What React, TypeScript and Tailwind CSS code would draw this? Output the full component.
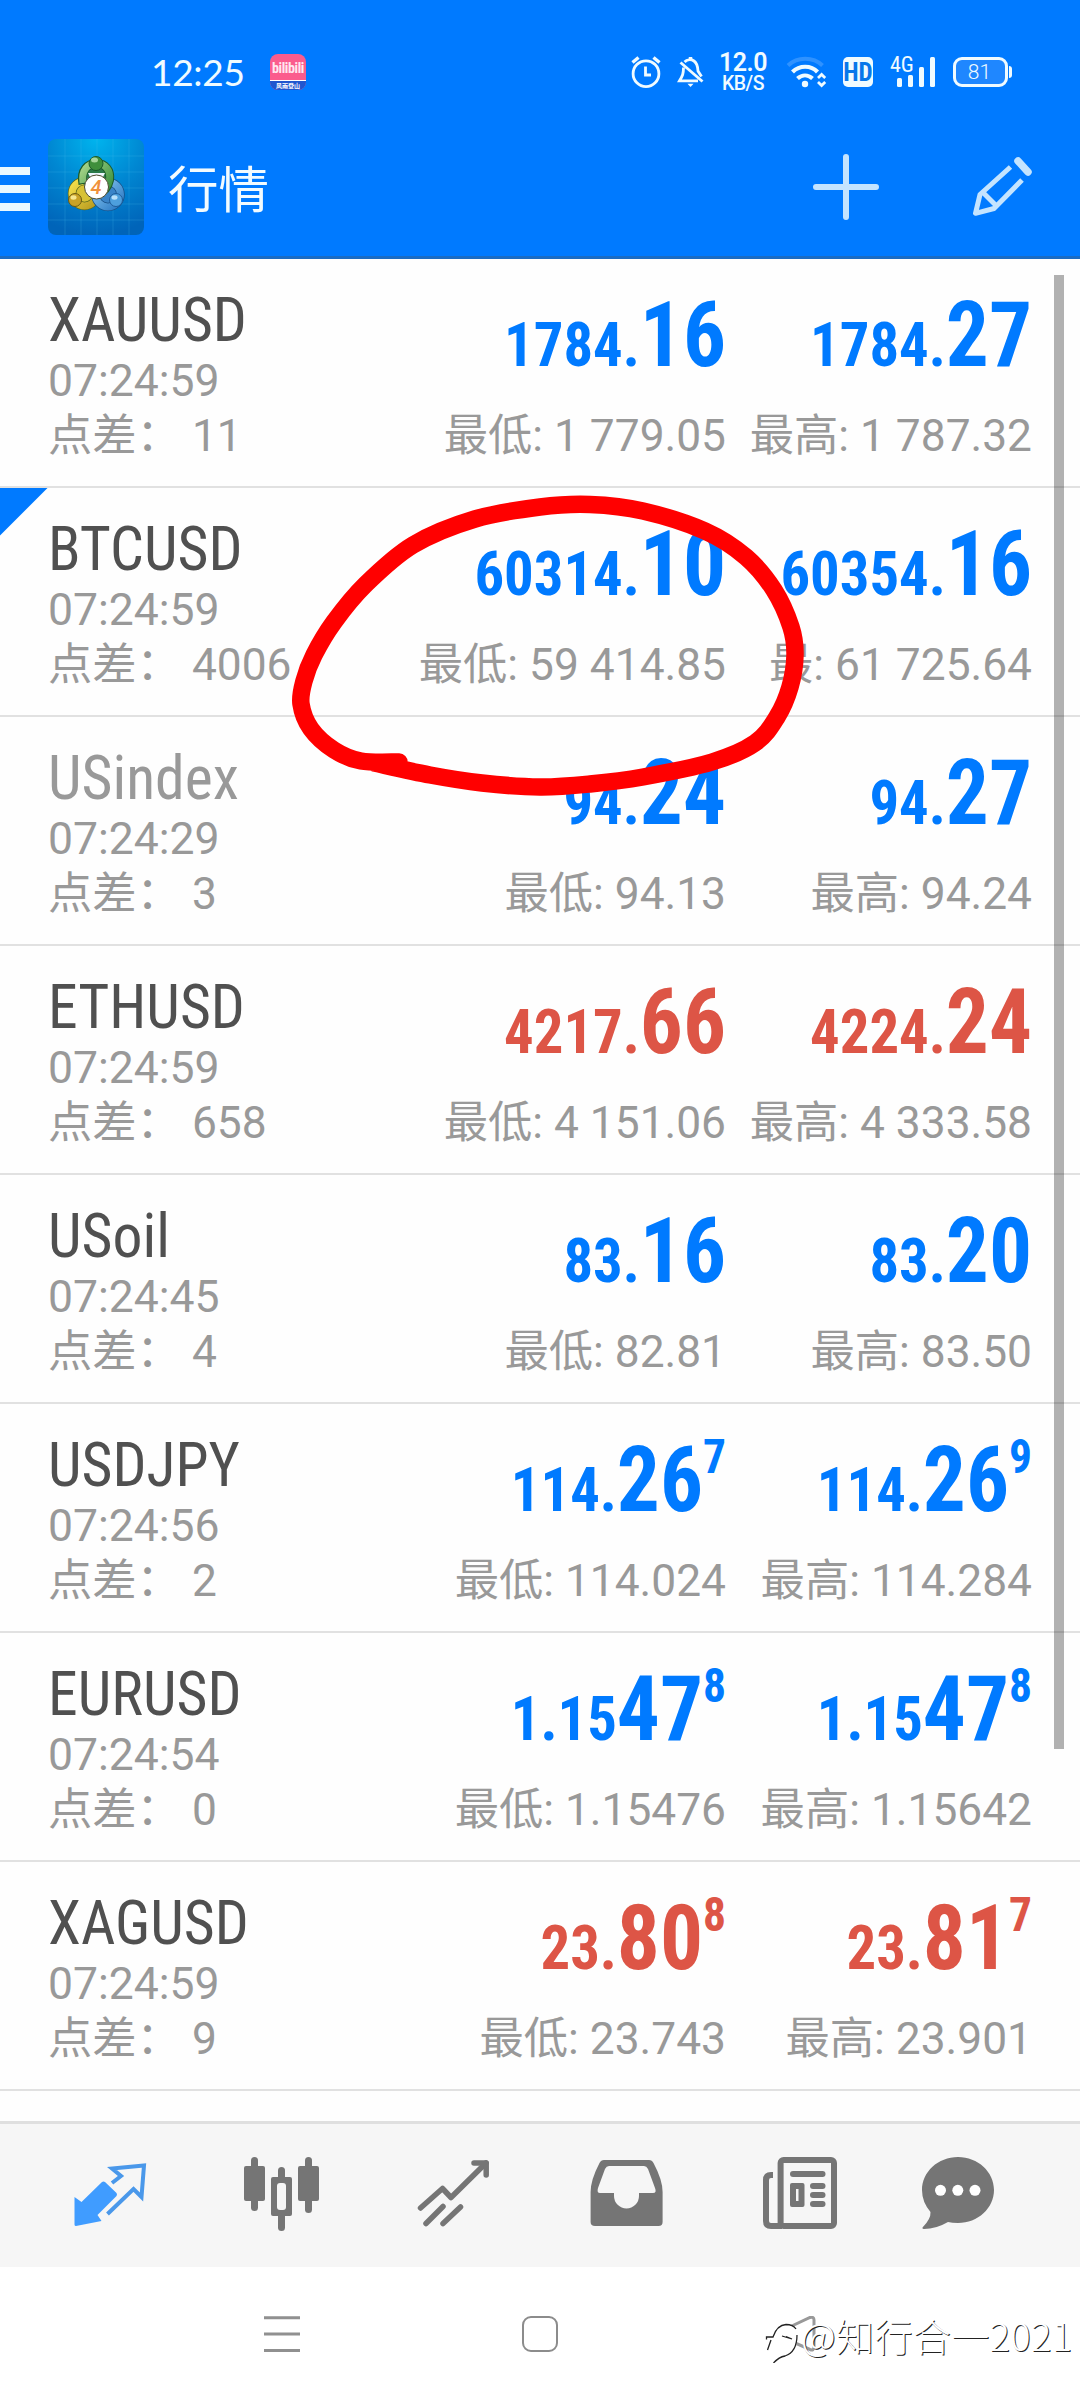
import React from "react";

type Price = { lead: string; big: string; sup?: string };
type Quote = {
  symbol: string;
  time: string;
  spread: string;
  bid: Price;
  ask: Price;
  low: string;
  high: string;
  highLabel?: string;
  down?: boolean;
  muted?: boolean;
  flagged?: boolean;
};

const quotes: Quote[] = [
  { symbol: "XAUUSD", time: "07:24:59", spread: "11", bid: { lead: "1784.", big: "16" }, ask: { lead: "1784.", big: "27" }, low: "1 779.05", high: "1 787.32" },
  { symbol: "BTCUSD", time: "07:24:59", spread: "4006", bid: { lead: "60314.", big: "10" }, ask: { lead: "60354.", big: "16" }, low: "59 414.85", high: "61 725.64", highLabel: "最", flagged: true },
  { symbol: "USindex", time: "07:24:29", spread: "3", bid: { lead: "94.", big: "24" }, ask: { lead: "94.", big: "27" }, low: "94.13", high: "94.24", muted: true },
  { symbol: "ETHUSD", time: "07:24:59", spread: "658", bid: { lead: "4217.", big: "66" }, ask: { lead: "4224.", big: "24" }, low: "4 151.06", high: "4 333.58", down: true },
  { symbol: "USoil", time: "07:24:45", spread: "4", bid: { lead: "83.", big: "16" }, ask: { lead: "83.", big: "20" }, low: "82.81", high: "83.50" },
  { symbol: "USDJPY", time: "07:24:56", spread: "2", bid: { lead: "114.", big: "26", sup: "7" }, ask: { lead: "114.", big: "26", sup: "9" }, low: "114.024", high: "114.284" },
  { symbol: "EURUSD", time: "07:24:54", spread: "0", bid: { lead: "1.15", big: "47", sup: "8" }, ask: { lead: "1.15", big: "47", sup: "8" }, low: "1.15476", high: "1.15642" },
  { symbol: "XAGUSD", time: "07:24:59", spread: "9", bid: { lead: "23.", big: "80", sup: "8" }, ask: { lead: "23.", big: "81", sup: "7" }, low: "23.743", high: "23.901", down: true },
];

function PriceText({ price, down }: { price: Price; down?: boolean }) {
  return (
    <div className={`flex h-[90px] origin-right scale-x-[0.947] items-baseline justify-end whitespace-nowrap font-['Roboto_Condensed',Roboto,sans-serif] font-bold leading-[90px] [font-stretch:75%] ${down ? "text-[#dd5546]" : "text-[#007aff]"}`}>
      <span className="text-[62px]">{price.lead}</span>
      <span className="text-[90px]">{price.big}</span>
      {price.sup && <span className="relative -top-[38px] text-[48px]">{price.sup}</span>}
    </div>
  );
}

function QuoteRow({ q }: { q: Quote }) {
  return (
    <div className="relative flex h-[229px] border-b-2 border-[#e1e1e1] pl-12 pr-12">
      {q.flagged && (
        <svg className="absolute left-0 top-0" width="48" height="48" viewBox="0 0 48 48">
          <path d="M0 0H47.500L0 47.500Z" fill="#007aff" />
        </svg>
      )}
      <div className="w-[310px] whitespace-nowrap pt-7 text-[44.5px] leading-[55px] text-[#999]">
        <div className={`mb-px h-[66px] w-[240px] origin-left scale-x-[0.963] font-['Roboto_Condensed',Roboto,sans-serif] text-[62px] leading-[66px] [font-stretch:75%] ${q.muted ? "text-[#999]" : "text-[#505050]"}`}>{q.symbol}</div>
        <div>{q.time}</div>
        <div className="text-[44.300px]">点差： {q.spread}</div>
      </div>
      <div className="w-[368px] whitespace-nowrap pt-8 text-right text-[44.300px] leading-[55px] text-[#999]">
        <PriceText price={q.bid} down={q.down} />
        <div className="mt-7">最低: {q.low}</div>
      </div>
      <div className="w-[306px] whitespace-nowrap pt-8 text-right text-[44.300px] leading-[55px] text-[#999]">
        <PriceText price={q.ask} down={q.down} />
        <div className="mt-7">{q.highLabel ?? "最高"}: {q.high}</div>
      </div>
    </div>
  );
}

function AlarmIcon() {
  return (
    <svg className="ml-[324px]" width="32" height="34" viewBox="630 55 32 34" fill="none" stroke="#f0fbff" strokeWidth="2.800">
      <circle cx="646" cy="73.700" r="12.900" />
      <path d="M645.500 66.500V75H651" />
      <path d="M632.500 62.500L638.500 57.500M659.500 62.500L653.500 57.500" strokeWidth="3.400" />
    </svg>
  );
}

function BellOffIcon() {
  return (
    <svg className="ml-[15px]" width="28" height="34" viewBox="677 55 28 34" fill="none" stroke="#f0fbff" strokeWidth="2.800">
      <path d="M680.500 62.500L702.500 81.500" />
      <path d="M683.500 67.500C683.500 74 682.500 76 679.500 80.800H698" />
      <path d="M684.500 62C687 59.500 691 59 694 61C697.500 63.500 697.800 67 698 71L701.500 76.500" />
      <path d="M690.500 57V60" strokeWidth="3.500" />
      <path d="M687.500 83.800H693.500L690.500 87Z" fill="#f0fbff" stroke="none" />
    </svg>
  );
}

function WifiIcon() {
  return (
    <svg className="ml-5" width="41" height="34" viewBox="787 55 41 34" fill="none" stroke="#f0fbff">
      <path d="M789 65.500C798.500 56.500 814 56.500 823.500 65.500" stroke="#2f92ff" strokeWidth="4" />
      <path d="M793.500 72C800.500 65 812 65 818.500 72" strokeWidth="4.200" />
      <path d="M798.500 78.500C803 74.500 809 74.500 813.500 78.500" strokeWidth="4.200" />
      <circle cx="806" cy="84" r="3.200" fill="#f0fbff" stroke="none" />
      <path d="M819 78L822.600 74.500L826.200 78M819 82L822.600 85.500L826.200 82" strokeWidth="2.800" />
    </svg>
  );
}

function SignalIcon() {
  return (
    <div className="relative ml-[17px] h-[34px] w-[47px]">
      <span className="absolute left-0 top-0 font-['Roboto_Condensed',Roboto,sans-serif] text-[22px] leading-[20px] [font-stretch:75%]">4G</span>
      <svg className="absolute left-0 top-0" width="47" height="34" viewBox="890 55 47 34" fill="#f0fbff">
        <rect x="897" y="78" width="5" height="9" rx="1.500" />
        <rect x="908" y="75" width="5" height="12" rx="1.500" />
        <rect x="919" y="67" width="5" height="20" rx="1.500" />
        <rect x="930" y="57" width="5" height="30" rx="1.500" />
      </svg>
    </div>
  );
}

function StatusBar() {
  return (
    <div className="flex h-[144px] items-start pt-[55px] text-[#f0fbff]">
      <div className="ml-[151px] h-[34px] w-[119px] whitespace-nowrap font-[Lato,sans-serif] text-[37px] leading-[34px] tracking-[-0.3px]">12:25</div>
      <div className="-mt-px h-9 w-9 overflow-hidden rounded-[8px] bg-[#fb5c8d] text-center">
        <div className="h-[26px] font-['Roboto_Condensed',Roboto,sans-serif] text-[14px] font-bold leading-[29px] tracking-[-0.4px] text-[#ffe8f0] [font-stretch:75%]">bilibili</div>
        <div className="h-[10px] whitespace-nowrap border-t border-white bg-[#2056cf] text-[6px] font-bold leading-[9px] text-white">风雨登山</div>
      </div>
      <AlarmIcon />
      <BellOffIcon />
      <div className="-mt-[2px] ml-[15px] flex w-[46px] flex-col items-center font-semibold">
        <div className="text-[25px] leading-[20px] tracking-[-0.5px]">12.0</div>
        <div className="mt-[2px] text-[19.500px] font-medium leading-[18px] tracking-[-0.5px]">KB/S</div>
      </div>
      <WifiIcon />
      <div className="ml-[16px] mt-[2px] h-[30px] w-[30px] rounded-[5px] bg-[#f0fbff] text-center font-['Roboto_Condensed',Roboto,sans-serif] text-[25px] font-bold leading-[31px] text-[#0877ea] [font-stretch:75%]">HD</div>
      <SignalIcon />
      <div className="ml-4 mt-[2px] flex items-center">
        <div className="h-[30px] w-[55px] rounded-[9px] border-[3px] border-[#f0fbff] bg-[#1f87ff] pr-[2px] text-center text-[21px] font-light leading-[25px]">81</div>
        <div className="ml-px h-3 w-[3px] rounded-r bg-[#f0fbff]" />
      </div>
    </div>
  );
}

function AppLogo() {
  return (
    <svg className="ml-[18px]" width="96" height="96" viewBox="0 0 96 96">
      <defs>
        <radialGradient id="logoBg" cx="50%" cy="0%" r="100%">
          <stop offset="0" stopColor="#00b4ee" />
          <stop offset="0.500" stopColor="#0087d2" />
          <stop offset="1" stopColor="#0064b9" />
        </radialGradient>
        <linearGradient id="logoGreen" x1="0" y1="0" x2="1" y2="1">
          <stop offset="0" stopColor="#a9d68b" />
          <stop offset="1" stopColor="#2f8a38" />
        </linearGradient>
        <linearGradient id="logoYellow" x1="0" y1="0" x2="1" y2="1">
          <stop offset="0" stopColor="#f5e14c" />
          <stop offset="1" stopColor="#b89a1e" />
        </linearGradient>
        <linearGradient id="logoBlue" x1="0" y1="0" x2="1" y2="1">
          <stop offset="0" stopColor="#8ccaf2" />
          <stop offset="1" stopColor="#2a79c4" />
        </linearGradient>
      </defs>
      <rect width="96" height="96" rx="8" fill="url(#logoBg)" />
      <path d="M17 0V96M33 0V96M49 0V96M65 0V96M81 0V96M0 17H96M0 33H96M0 49H96M0 65H96M0 81H96" stroke="#4cc3ee" strokeOpacity="0.220" strokeWidth="1" />
      <circle cx="36.500" cy="54.500" r="12.500" fill="#d8c235" stroke="#5d6a1c" strokeWidth="8.500" />
      <circle cx="36.500" cy="54.500" r="12.500" fill="none" stroke="url(#logoYellow)" strokeWidth="7" />
      <circle cx="60" cy="55.500" r="12.500" fill="#3a84c8" stroke="#174f86" strokeWidth="8.500" />
      <circle cx="60" cy="55.500" r="12.500" fill="none" stroke="url(#logoBlue)" strokeWidth="7" />
      <path d="M35 45C32 31 40 24.500 48.500 24.500C57 24.500 63 31 61.500 41C60 48 55 53 50 55" fill="#2b7a4a" stroke="#1c5a2a" strokeWidth="9" />
      <path d="M35 44C33 31 40 24.500 48.500 24.500C57 24.500 63 31 61.500 41C60 48 55 53 50 55" fill="none" stroke="url(#logoGreen)" strokeWidth="7" />
      <path d="M40 34H57L54 40H43Z" fill="#eef6ff" />
      <circle cx="48" cy="24.500" r="7" fill="#3f8f3c" stroke="#1c5a2a" />
      <ellipse cx="46.500" cy="21" rx="3.500" ry="2.500" fill="#a6d59a" />
      <circle cx="27" cy="61" r="6.500" fill="#c9a227" stroke="#6b5a12" />
      <ellipse cx="25.500" cy="58.500" rx="3" ry="2.200" fill="#f5e690" />
      <circle cx="68" cy="61" r="6.500" fill="#4d9fdd" stroke="#1f5c99" />
      <ellipse cx="66.500" cy="58.500" rx="3" ry="2.200" fill="#b9e0fa" />
      <circle cx="48.500" cy="48" r="12" fill="#fff" stroke="#4c4a30" />
      <text x="48" y="55" textAnchor="middle" fontFamily="Roboto, sans-serif" fontStyle="italic" fontWeight="500" fontSize="20" fill="#f0913c">4</text>
    </svg>
  );
}

function Header() {
  return (
    <header className="flex h-[115px] items-start border-b-[3px] border-[#1a6cc4]">
      <div className="mt-[23px] flex w-[30px] flex-col gap-[10px]">
        <div className="h-2 bg-[#eaf8ff]" />
        <div className="h-2 bg-[#eaf8ff]" />
        <div className="h-2 bg-[#eaf8ff]" />
      </div>
      <div className="-mt-[5px]">
        <AppLogo />
      </div>
      <h1 className="ml-6 mt-[15px] w-[640px] text-[50.5px] font-normal leading-[64px] text-[#f2fbff]">行情</h1>
      <svg className="mt-[6px]" width="76" height="76" viewBox="808 150 76 76" stroke="#c4e4ff" strokeWidth="6" strokeLinecap="round">
        <path d="M846 157V217M816 187H876" />
      </svg>
      <svg className="ml-[84px] mt-[6px]" width="70" height="70" viewBox="968 150 70 70" fill="none" stroke="#c4e4ff" strokeWidth="5">
        <path d="M1010.500 167L980 194.500L975.500 213.300L994 208.500L1022 180" strokeLinejoin="round" />
        <path d="M982 191.500L997.500 207" />
        <path d="M1018 161L1028 172" strokeWidth="7.500" strokeLinecap="round" />
      </svg>
    </header>
  );
}

function TabBar() {
  return (
    <nav className="h-[146px] border-t-[3px] border-[#dfdfdf] bg-[#f6f6f6]">
      <div className="flex h-full items-start pt-6 pl-16">
        <svg width="90" height="90" viewBox="64 2148 90 90">
          <path d="M74.500 2197L81.500 2202L102 2182Q103.500 2181 105 2182L116.500 2193Q117.500 2194.500 116.500 2196L97.500 2215L101.500 2221L76 2226Q74.500 2226 74.500 2224.500Z" fill="#409cff" />
          <path d="M112 2183L121 2176L112 2168.500L144 2165.500L141.500 2197L133.500 2189L107.500 2214" fill="none" stroke="#4a98ea" strokeWidth="4" />
        </svg>
        <svg className="ml-[82px]" width="90" height="90" viewBox="236 2148 90 90" fill="#757575">
          <rect x="251" y="2157" width="7" height="54" rx="3.500" />
          <rect x="244" y="2166" width="21" height="35" rx="2" />
          <rect x="305" y="2157" width="7" height="56" rx="3.500" />
          <rect x="298" y="2166" width="21" height="35" rx="2" />
          <rect x="278" y="2167" width="7" height="64" rx="3.500" />
          <rect x="271" y="2177" width="21" height="39" rx="2" />
          <rect x="277" y="2183" width="9" height="27" rx="3" fill="#f6f6f6" />
        </svg>
        <svg className="ml-[82px]" width="90" height="90" viewBox="408 2148 90 90" fill="none" stroke="#757575" strokeWidth="5.500" strokeLinecap="round" strokeLinejoin="round">
          <path d="M420.500 2208L442.500 2188.500L451 2197.500L486 2163" />
          <path d="M474 2163H486.200V2175" />
          <path d="M426 2223.500L443 2206.500M443 2223.500L460.500 2207" />
        </svg>
        <svg className="ml-[84px]" width="90" height="90" viewBox="582 2148 90 90" fill="#757575">
          <path fillRule="evenodd" d="M604 2160H649Q652 2160 653.500 2163Q662.600 2180 662.600 2192V2222Q662.600 2226 658.500 2226H595Q590.600 2226 590.600 2222V2192Q590.600 2180 599.500 2163Q601 2160 604 2160ZM609 2166Q606.500 2166 605 2169L598 2188Q596.500 2193 600 2193H614V2196A12.500 12.500 0 0 0 639 2196V2193H653Q657 2193 655 2188L648 2169Q646.500 2166 644 2166Z" />
        </svg>
        <svg className="ml-[82px]" width="90" height="90" viewBox="754 2148 90 90" fill="#757575">
          <rect x="780.600" y="2160" width="53.400" height="66" rx="3" fill="none" stroke="#757575" strokeWidth="6" />
          <path d="M773 2175H771Q766 2175 766 2180V2221Q766 2226 771 2226H782" fill="none" stroke="#757575" strokeWidth="6" />
          <rect x="790" y="2171" width="35.500" height="6" rx="3" />
          <rect x="790" y="2183" width="14.500" height="24" rx="2" />
          <rect x="796" y="2189" width="2.500" height="12" fill="#f6f6f6" />
          <rect x="810" y="2183" width="15.500" height="6" rx="3" />
          <rect x="810" y="2192" width="15.500" height="6" rx="3" />
          <rect x="810" y="2201" width="15.500" height="6" rx="3" />
        </svg>
        <svg className="ml-[70px]" width="90" height="90" viewBox="914 2148 90 90" fill="#757575">
          <path d="M958 2157C978 2157 994 2172 994 2190C994 2208 978 2223 958 2223Q952 2223 948 2222Q936 2229 924 2229Q922 2229 922.500 2227.500Q931 2219 930.500 2212Q922 2202 922 2190C922 2172 938 2157 958 2157Z" />
          <g fill="#fff">
            <circle cx="940.500" cy="2190.300" r="5.500" />
            <circle cx="957.800" cy="2190.300" r="5.500" />
            <circle cx="975" cy="2190.300" r="5.500" />
          </g>
        </svg>
      </div>
    </nav>
  );
}

function SystemNav() {
  return (
    <div className="relative flex h-[133px] items-start bg-white pt-[49px]">
      <svg className="ml-[264px]" width="36" height="36" viewBox="0 0 36 36" stroke="#909090" strokeWidth="3">
        <path d="M0 1.700H36M0 18H36M0 34.500H36" />
      </svg>
      <div className="ml-[222px] h-9 w-9 rounded-[9px] border-[2.500px] border-[#8c8c8c]" />
      <svg className="ml-[216px]" width="44" height="36" viewBox="774 2316 44 36" fill="none" stroke="#999" strokeWidth="3">
        <path d="M779 2332L810 2317.500Q814 2316.500 814 2320V2347Q814 2351 810 2349.500L779 2336Q776 2334 779 2332Z" />
      </svg>
      <div className="absolute left-[764px] top-[50px] flex items-start">
        <svg width="37" height="46" viewBox="764 2317 37 46" fill="none">
          <path d="M767 2340L772 2336Q778 2324 787 2324Q795 2325 798 2334Q798 2352 785 2356Q779 2356 774 2362L778 2352Q769 2352 767 2348Z" fill="#fff" />
          <path d="M766.500 2339.500V2337H773Q777 2325 786 2324.500Q793 2324.500 796 2329M767.500 2350L771 2340M782 2336L792 2339L786 2336.500M797 2335Q797 2352 785 2356Q779 2357 773.500 2363" stroke="#222" strokeWidth="1.300" />
        </svg>
        <div className="-mt-[7px] whitespace-nowrap font-['Noto_Sans_CJK_SC',sans-serif] text-[38px] font-light leading-[50px] tracking-[0.4px] text-white [text-shadow:1px_1px_0_#222]">@知行合一2021</div>
      </div>
    </div>
  );
}

const strokePoints: [number, number][] = [
  [399, 762], [361, 761], [334, 750], [311, 729], [301, 704], [304, 681], [314, 655], [334, 622], [365, 585],
  [413, 545], [475, 519], [540, 507], [590, 504.5], [643, 511], [705, 531], [746, 557], [774, 590], [791, 627],
  [795, 655], [790, 687], [777, 717], [755, 743], [712, 762], [643, 777], [590, 784], [540, 787], [482, 783],
  [430, 775], [374, 763],
];

// Catmull-Rom spline through the points, written as cubic segments.
function smoothPath(p: [number, number][]) {
  let d = `M${p[0][0]} ${p[0][1]}`;
  for (let i = 0; i < p.length - 1; i++) {
    const a = p[Math.max(i - 1, 0)];
    const b = p[i];
    const c = p[i + 1];
    const e = p[Math.min(i + 2, p.length - 1)];
    d += `C${b[0] + (c[0] - a[0]) / 6} ${b[1] + (c[1] - a[1]) / 6} ${c[0] - (e[0] - b[0]) / 6} ${c[1] - (e[1] - b[1]) / 6} ${c[0]} ${c[1]}`;
  }
  return d;
}

export default function App() {
  return (
    <div className="relative flex h-[2400px] w-[1080px] flex-col overflow-hidden bg-white font-[Roboto,'Noto_Sans_CJK_SC',sans-serif]">
      <div className="bg-[#007aff]">
        <StatusBar />
        <Header />
      </div>
      <main className="relative h-[1862px] bg-[#fefefe]">
        {quotes.map((q) => (
          <QuoteRow key={q.symbol} q={q} />
        ))}
        <div className="absolute right-4 top-4 h-[1474px] w-[10px] bg-black/30" />
      </main>
      <TabBar />
      <SystemNav />
      <svg className="pointer-events-none absolute left-[280px] top-[480px]" width="540" height="330" viewBox="280 480 540 330">
        <path d={smoothPath(strokePoints)} fill="none" stroke="#ff0000" strokeWidth="17.500" strokeLinecap="round" strokeLinejoin="round" />
      </svg>
    </div>
  );
}
